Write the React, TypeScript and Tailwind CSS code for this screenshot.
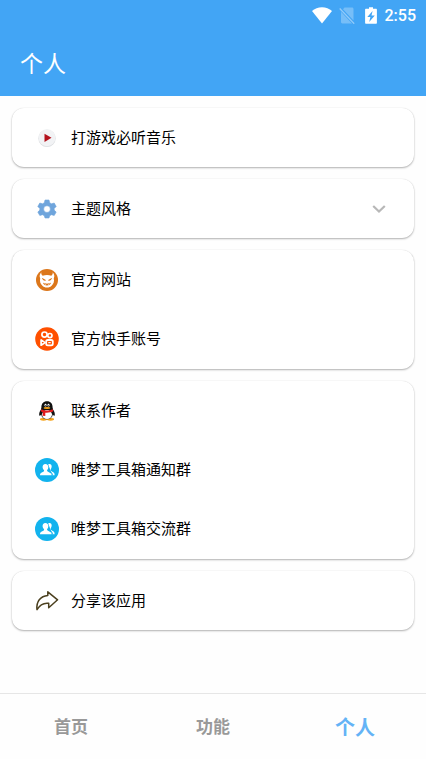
import { useState } from "react";
import type { ReactNode } from "react";

function WifiIcon() {
  return (
    <svg viewBox="0 0 20 17" className="h-[17px] w-5" fill="#fff" aria-hidden="true">
      <path d="M10 16.6 0 4.100C2.600 1.500 6.200.2 10 .2s7.400 1.300 10 3.900z" />
    </svg>
  );
}

function NoSimIcon() {
  return (
    <svg viewBox="0 0 16 17" className="h-[17px] w-4" aria-hidden="true">
      <path d="M5.500.500h7.500c.9 0 1.500.6 1.500 1.500v11.500L4 2.200zM2 4.800l11 11.700H3.400C2.600 16.500 2 15.900 2 15.100z" fill="#fff" opacity=".28" />
      <path d="M.7 1.500 15.200 16.700" stroke="#fff" strokeWidth="1.300" opacity=".42" />
    </svg>
  );
}

function BatteryIcon() {
  return (
    <svg viewBox="0 0 12 17" className="h-[17px] w-3" aria-hidden="true">
      <path d="M4 .2h4v1.600h2.900c.6 0 1 .4 1 1v13c0 .6-.4 1-1 1H1.100c-.6 0-1-.4-1-1v-13c0-.6.4-1 1-1H4z" fill="#fff" />
      <path d="M7.600 3.900 2.300 10h3.100l-1.200 4.900 5.600-6.500H6.500z" fill="#42a5f5" />
    </svg>
  );
}

function PlayIcon() {
  return (
    <svg viewBox="0 0 24 24" className="size-6" aria-hidden="true">
      <circle cx="12" cy="12.300" r="8.700" fill="#dcdee1" />
      <circle cx="12" cy="11.800" r="8.500" fill="#f2f3f5" />
      <path d="M9.500 7.700v8.200l7-4.100z" fill="#b3121d" />
    </svg>
  );
}

function GearIcon() {
  return (
    <svg viewBox="0 0 24 24" className="size-6" fill="#6fa5dc" aria-hidden="true">
      <path
        fillRule="evenodd"
        d="M10 3h4l.7 2.800 1.700 1 2.800-.8 2 3.500-2 2v1.600l2 2-2 3.400-2.800-.8-1.700 1L14 21h-4l-.7-2.300-1.700-1-2.800.8-2-3.400 2-2v-1.600l-2-2 2-3.500 2.800.8 1.700-1zM12 8.700a3.400 3.400 0 1 0 0 6.800 3.400 3.400 0 0 0 0-6.800z"
        stroke="#6fa5dc"
        strokeWidth=".6"
        strokeLinejoin="round"
      />
    </svg>
  );
}

function MaskIcon() {
  return (
    <svg viewBox="0 0 24 24" className="size-6" aria-hidden="true">
      <circle cx="12" cy="12" r="11" fill="#dc771b" />
      <path d="M6.300 4.300C6.100 6 6.600 7 7.700 7.700c2.700-.9 5.900-.9 8.600 0 1.100-.7 1.600-1.700 1.400-3.400 1.700 1.900 2.100 4 1.100 6 .6 3.300-.1 5.600-2 7.100C15.600 18.800 14 19.500 12 19.500s-3.600-.7-4.800-2.100c-1.900-1.500-2.600-3.800-2-7.100-1-2-.6-4.100 1.100-6z" fill="#fff" />
      <path d="m6.900 9.800 4.300 2.500c-1.400 1-3.700.2-4.300-2.500zM17.100 9.800l-4.300 2.500c1.400 1 3.700.2 4.300-2.500z" fill="#dc771b" />
      <path d="M8 14.800c2.600.8 5.400.8 8 0-.5 1.700-2 2.700-4 2.700s-3.500-1-4-2.700z" fill="#dc771b" />
      <path d="m9.600 15.400 1 1.100.8-1M12.700 15.500l.8 1 1-1.100" fill="none" stroke="#fff" strokeWidth=".6" />
    </svg>
  );
}

function KuaishouIcon() {
  return (
    <svg viewBox="0 0 24 24" className="size-6" aria-hidden="true">
      <circle cx="12" cy="12" r="11.800" fill="#ff5000" />
      <g fill="none" stroke="#fff">
        <circle cx="9.500" cy="7.600" r="2.600" strokeWidth="1.700" />
        <circle cx="14.900" cy="8.600" r="2.100" strokeWidth="1.700" />
        <path d="M6.100 12.900v5.300l4-2.600z" strokeWidth="1.700" strokeLinejoin="round" />
        <rect x="11.200" y="13" width="6.600" height="5.400" rx="1.600" strokeWidth="1.800" />
        <path d="M13.300 15.700h2.400" strokeWidth="1.200" />
      </g>
    </svg>
  );
}

function PenguinIcon() {
  return (
    <svg viewBox="0 0 24 24" className="size-6" aria-hidden="true">
      <ellipse cx="8.500" cy="20.300" rx="3.600" ry="1.400" fill="#f5a31a" />
      <ellipse cx="15.500" cy="20.300" rx="3.600" ry="1.400" fill="#f5a31a" />
      <path d="M12 2.200c-3.600 0-5.700 2.500-5.600 6.200-.2.800-.5 1.500-.4 2.200-1.500 2-2.300 4.400-1.600 6.200.6.200 1.200-.3 1.800-1.300.4 3 2.600 4.700 5.800 4.700s5.400-1.700 5.800-4.700c.6 1 1.200 1.500 1.800 1.300.7-1.800-.1-4.200-1.600-6.200.1-.7-.2-1.400-.4-2.200.1-3.700-2-6.200-5.600-6.200z" fill="#111" />
      <ellipse cx="12" cy="15.600" rx="5" ry="4.500" fill="#fff" />
      <ellipse cx="10.500" cy="6.200" rx="1" ry="1.400" fill="#fff" />
      <ellipse cx="13.500" cy="6.200" rx="1" ry="1.400" fill="#fff" />
      <circle cx="10.700" cy="6.400" r=".5" fill="#111" />
      <circle cx="13.300" cy="6.400" r=".5" fill="#111" />
      <ellipse cx="12" cy="9" rx="3.300" ry=".9" fill="#f5a31a" />
      <path d="M6.200 10.200c3.500 1.800 8.100 1.800 11.600 0l.5 2.100c-2.300 1.200-5.200 1.600-8 1.400v3.400l-2.700-.3.300-3.600c-.9-.3-1.600-.6-2.200-1z" fill="#e21c1c" />
    </svg>
  );
}

function GroupIcon() {
  return (
    <svg viewBox="0 0 24 24" className="size-6" aria-hidden="true">
      <circle cx="12" cy="12" r="12" fill="#12b3ee" />
      <path d="M13.200 6.500c1-.7 2-.6 2.800.1 1 1 .9 3-.1 4.500-.3.700-.3 1.400.2 1.800l2.500 1.600c.8.500 1 1.300 1 2.700h-2.200z" fill="#fff" />
      <path d="M10.300 6.100c2 0 3.200 1.400 3 3.300-.1 1.200-.6 2-1.200 2.700-.2.600 0 1.200.5 1.500l2.700 1.300c1 .5 1.300 1.200 1.300 2.400H5c0-1.400.4-2.100 1.300-2.600L8.700 13.500c.5-.3.500-.9.200-1.500-.7-.7-1.200-1.500-1.300-2.600-.2-1.900 1-3.300 2.700-3.300z" fill="#fff" />
      <path d="M13.400 11.400c-.2.900 0 1.500.6 1.900l2.600 1.400 1.400 2.700" fill="none" stroke="#12b3ee" strokeWidth=".8" />
    </svg>
  );
}

function ShareIcon() {
  return (
    <svg viewBox="0 0 24 24" className="size-6" aria-hidden="true">
      <path
        d="M12.800 6.400V2.800L22.600 10.800l-8.900 8v-4.500c-4.500-.6-8.900 1.500-11.700 6.400C1 12.800 5.400 6.900 12.800 6.400z"
        fill="none"
        stroke="#4b401f"
        strokeWidth="1.500"
        strokeLinejoin="round"
      />
    </svg>
  );
}

function ChevronIcon() {
  return (
    <svg viewBox="0 0 14 10" className="h-[10px] w-[14px]" aria-hidden="true">
      <path d="m1.200 2 5.800 5.500L12.800 2" fill="none" stroke="#b8b8b8" strokeWidth="2.200" />
    </svg>
  );
}

type Item = { label: string; icon: ReactNode; expandable?: boolean };

const groups: Item[][] = [
  [{ label: "打游戏必听音乐", icon: <PlayIcon /> }],
  [{ label: "主题风格", icon: <GearIcon />, expandable: true }],
  [
    { label: "官方网站", icon: <MaskIcon /> },
    { label: "官方快手账号", icon: <KuaishouIcon /> },
  ],
  [
    { label: "联系作者", icon: <PenguinIcon /> },
    { label: "唯梦工具箱通知群", icon: <GroupIcon /> },
    { label: "唯梦工具箱交流群", icon: <GroupIcon /> },
  ],
  [{ label: "分享该应用", icon: <ShareIcon /> }],
];

const tabs = ["首页", "功能", "个人"];

export default function App() {
  const [active, setActive] = useState("个人");

  return (
    <div className="flex min-h-screen flex-col bg-[#fefefe] font-['Roboto','Noto_Sans_CJK_SC',sans-serif] text-black">
      <header className="bg-[#42a5f5] text-white">
        <div className="flex h-[30px] items-center justify-end pr-[10px]">
          <WifiIcon />
          <span className="ml-[7px] flex"><NoSimIcon /></span>
          <span className="mr-2 ml-[10px] flex"><BatteryIcon /></span>
          <time className="pt-0.5 text-base font-medium">2:55</time>
        </div>
        <h1 className="flex h-[66px] items-center px-5 pt-1 text-[23px] leading-8">个人</h1>
      </header>

      <main className="flex flex-1 flex-col gap-3 p-3">
        {groups.map((group) => (
          <section
            key={group[0].label}
            className={`overflow-hidden rounded-xl bg-white shadow-[0_1px_2px_rgba(0,0,0,0.3),0_0_1px_rgba(0,0,0,0.12)] ${
              group.length > 1 ? "pb-px" : ""
            }`}
          >
            {group.map((item) => (
              <button key={item.label} type="button" className="flex h-[59px] w-full items-center pr-7 pl-[23px] text-left">
                {item.icon}
                <span className="ml-3 flex-1 text-[15px] leading-6">{item.label}</span>
                {item.expandable && <ChevronIcon />}
              </button>
            ))}
          </section>
        ))}
      </main>

      <nav className="grid h-[66px] grid-cols-3 border-t border-[#e6e6e6]">
        {tabs.map((tab) => (
          <button
            key={tab}
            type="button"
            onClick={() => setActive(tab)}
            className={
              tab === active
                ? "pt-0.5 text-xl font-bold text-[#64b3f6]"
                : "pt-0.5 text-[17px] font-bold text-[#999]"
            }
          >
            {tab}
          </button>
        ))}
      </nav>
    </div>
  );
}
